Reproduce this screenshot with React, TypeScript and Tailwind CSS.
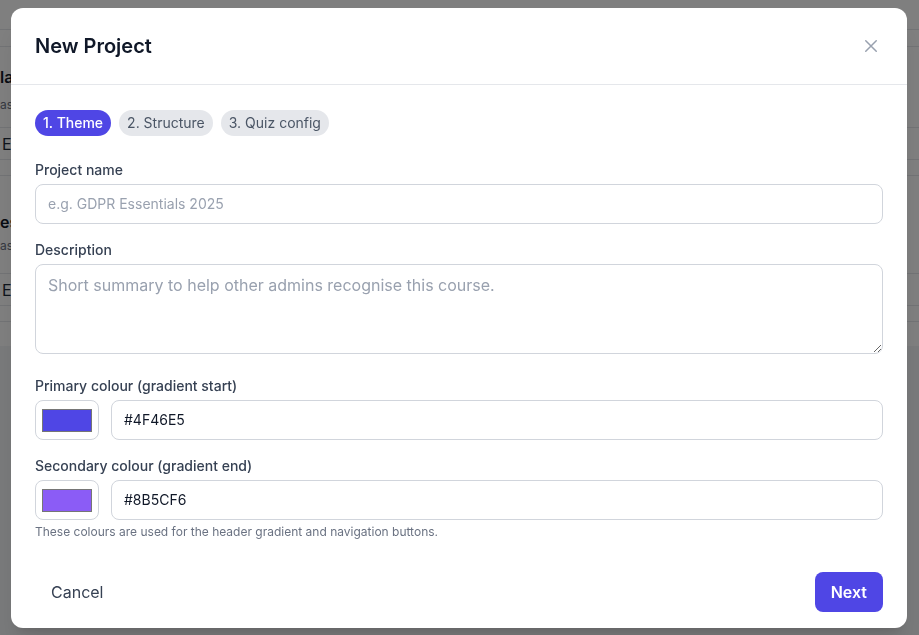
import { useState } from "react";

const steps = ["1. Theme", "2. Structure", "3. Quiz config"];

// 뒤쪽 페이지 - 모달 뒤에 살짝 보이는 프로젝트 목록 (왼쪽 가장자리만 보임)
function BackgroundPage() {
  return (
    <div className="h-[635px] bg-gray-100">
      <div className="bg-white">
        <div className="h-[30px] border-b border-gray-200" />
        <div className="h-[17px] border-b border-gray-200" />
        <div className="pt-[18px] h-[81px] border-b border-gray-200">
          <p className="text-base font-semibold text-gray-900">la</p>
          <p className="mt-2 text-xs text-gray-500">as</p>
        </div>
        <div className="h-[32px] flex items-center pl-[2px] border-b border-gray-200 text-base text-gray-800">E</div>
        <div className="h-[16px] border-b border-gray-200" />
        <div className="pt-[34px] h-[98px] border-b border-gray-200">
          <p className="text-base font-semibold text-gray-900">es</p>
          <p className="mt-1 text-xs text-gray-500">as</p>
        </div>
        <div className="h-[32px] flex items-center pl-[2px] border-b border-gray-200 text-base text-gray-800">E</div>
        <div className="h-[16px] border-b border-gray-200" />
        <div className="h-[24px]" />
      </div>
    </div>
  );
}

function ColourRow({ label, value }: { label: string; value: string }) {
  return (
    <div>
      <label className="block mb-1 text-sm font-medium text-gray-700">{label}</label>
      <div className="flex gap-3">
        <div className="w-16 h-10 shrink-0 rounded-lg border border-gray-300 bg-white px-[6px] pt-[8px] pb-[7px]">
          <div className="w-full h-full border border-[#767676]" style={{ backgroundColor: value }} />
        </div>
        <input
          defaultValue={value}
          className="flex-1 h-10 rounded-lg border border-gray-300 px-3 text-sm text-gray-900 outline-none"
        />
      </div>
    </div>
  );
}

export default function App() {
  const [step, setStep] = useState(0);

  return (
    <div className="relative font-['Inter','Liberation_Sans',sans-serif]">
      <BackgroundPage />

      {/* 모달 오버레이 */}
      <div className="fixed inset-0 bg-black/50 flex items-center justify-center pl-[11px] pr-[12px] py-3">
        <div className="w-full bg-white rounded-xl shadow-xl">
          {/* 헤더 */}
          <div className="flex items-center justify-between px-6 py-6 border-b border-gray-200">
            <h2 className="text-xl font-semibold text-gray-900">New Project</h2>
            <button className="text-gray-400 mr-[3px]">
              <svg width="18" height="18" viewBox="0 0 24 24" fill="none" stroke="currentColor" strokeWidth="2" strokeLinecap="round">
                <path d="M5 5l14 14M19 5L5 19" />
              </svg>
            </button>
          </div>

          {/* 본문 */}
          <div className="px-6 pt-[25px] pb-6">
            <div className="flex gap-2 mb-6">
              {steps.map((s, i) => (
                <button
                  key={s}
                  onClick={() => setStep(i)}
                  className={
                    i === step
                      ? "h-[26px] px-2 rounded-full bg-[#4F46E5] text-white text-sm font-medium"
                      : "h-[26px] px-2 rounded-full bg-gray-200 text-gray-600 text-sm"
                  }
                >
                  {s}
                </button>
              ))}
            </div>

            <div className="flex flex-col gap-4">
              <div>
                <label className="block mb-1 text-sm font-medium text-gray-700">Project name</label>
                <input
                  placeholder="e.g. GDPR Essentials 2025"
                  className="w-full h-10 rounded-lg border border-gray-300 px-3 text-sm text-gray-900 placeholder:text-gray-400 outline-none"
                />
              </div>
              <div>
                <label className="block mb-1 text-sm font-medium text-gray-700">Description</label>
                <textarea
                  rows={3}
                  placeholder="Short summary to help other admins recognise this course."
                  className="block w-full mb-1.5 rounded-lg border border-gray-300 px-3 py-2 text-base text-gray-900 placeholder:text-gray-400 outline-none"
                />
              </div>
              <ColourRow label="Primary colour (gradient start)" value="#4F46E5" />
              <div>
                <ColourRow label="Secondary colour (gradient end)" value="#8B5CF6" />
                <p className="mt-1 text-xs text-gray-500">
                  These colours are used for the header gradient and navigation buttons.
                </p>
              </div>
            </div>
          </div>

          {/* 푸터 */}
          <div className="flex items-center justify-between px-6 pt-2 pb-4">
            <button className="px-4 py-2 text-base text-gray-700">Cancel</button>
            <button className="px-4 py-2 rounded-lg bg-[#4F46E5] text-base font-semibold text-white">Next</button>
          </div>
        </div>
      </div>
    </div>
  );
}
